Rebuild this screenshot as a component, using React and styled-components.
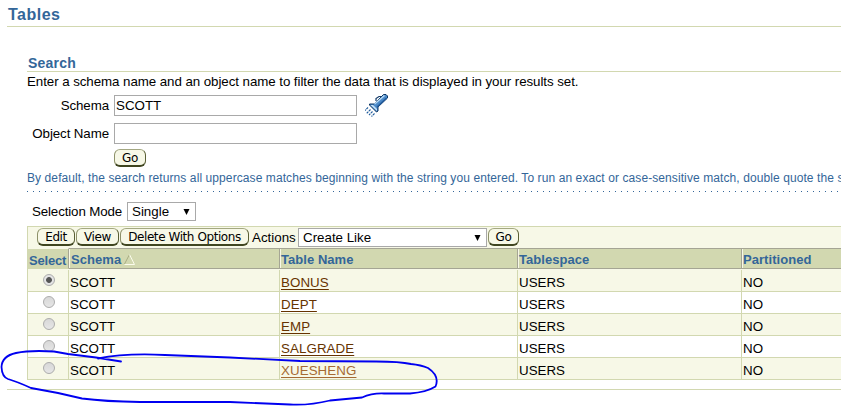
import React from 'react';
import styled, { createGlobalStyle, css } from 'styled-components';

const GlobalStyle = createGlobalStyle`
  * { box-sizing: border-box; }
  html, body { margin: 0; background: #fff; overflow: hidden; }
  body { font: 13.33px/16px "Liberation Sans", Arial, sans-serif; color: #000; }
`;

const Page = styled.main`
  position: relative;
  width: 841px;
  height: 410px;
  padding: 0 0 0 7px;
  overflow: hidden;
  white-space: nowrap;
`;
const PageTitle = styled.h1`
  margin: 0;
  height: 27px;
  padding: 5px 0 0 1px;
  border-bottom: 1px solid #d2d8b0;
  color: #336699;
  font-size: 16px;
  line-height: 20px;
  letter-spacing: 0.5px;
`;
const Content = styled.section`
  height: 363px;
  padding: 28px 0 0 20px;
  border-bottom: 1px solid #d2d8b0;
`;
const SectionTitle = styled.h2`
  margin: 0;
  height: 17px;
  padding-left: 1px;
  border-bottom: 1px solid #d2d8b0;
  color: #336699;
  font-size: 14px;
  line-height: 16px;
  letter-spacing: 0.2px;
`;
const Intro = styled.p`
  margin: 0;
  height: 23px;
  line-height: 19px;
  letter-spacing: -0.067px;
`;
const Field = styled.div`
  display: grid;
  grid-template-columns: 82px 243px auto;
  column-gap: 5px;
  height: 28px;
  align-items: start;
`;
const Label = styled.label`
  text-align: right;
  line-height: 21px;
  letter-spacing: -0.1px;
`;
const Input = styled.input`
  width: 243px;
  height: 21px;
  padding: 0 1px;
  border: 1px solid #a9a9a9;
  outline: 0;
  font: 13.33px "Liberation Sans", Arial, sans-serif;
`;
const FieldIcon = styled.div`
  margin: -2px 0 0 3px;
  line-height: 0;
`;
const ButtonRow = styled.div`
  height: 21px;
  display: flex;
  align-items: flex-start;
  margin: -2px 0 0 87px;
`;
const Button = styled.button`
  width: ${(p) => p.$width}px;
  height: 18px;
  flex: none;
  padding: 1px 0 0;
  border: 1px solid #7b8057;
  border-color: #a3a782 #595f35 #3f4520 #8d9169;
  border-bottom-width: 2px;
  border-radius: 6px;
  background: #f7f8e7;
  color: #000;
  font: 12px/14px "DejaVu Sans", Verdana, sans-serif;
  letter-spacing: -0.42px;
  white-space: nowrap;
`;
const Hint = styled.p`
  margin: 0;
  height: 21px;
  color: #336699;
  font-size: 12px;
  line-height: 16px;
  letter-spacing: 0.09px;
`;
const Dots = styled.div`
  height: 1px;
  background: repeating-linear-gradient(90deg, #336699 0 1px, transparent 1px 6px);
`;
const ModeRow = styled.div`
  display: flex;
  align-items: center;
  height: 34px;
  padding: 5px 0 0 5px;
`;
const ModeLabel = styled.span`
  width: 95px;
  letter-spacing: -0.13px;
`;
const Picker = styled.div`
  display: flex;
  justify-content: space-between;
  align-items: center;
  flex: none;
  width: ${(p) => p.$width}px;
  height: 19px;
  padding: 0 5px 0 4px;
  border: 1px solid #a9a9a9;
  background: #fff;
`;
const TableBox = styled.div`
  width: 900px;
  border: 1px solid #d2d8b0;
  border-right: 0;
  border-bottom: 0;
`;
const Toolbar = styled.div`
  display: flex;
  align-items: flex-start;
  gap: 1px;
  height: 21px;
  padding: 1px 0 0 9px;
  background: #f7f8e7;
`;
const ActionLabel = styled.span`
  width: 45px;
  margin-left: 2px;
  line-height: 19px;
  flex: none;
`;
const columns = css`
  display: grid;
  grid-template-columns: 41px 211px 238px 224px 1fr;
`;
const HeaderRow = styled.div`
  ${columns}
  height: 22px;
  background: #f7f8e7;
`;
const HeaderCell = styled.div`
  display: flex;
  gap: 3px;
  height: 21px;
  padding: 2px 0 0 1px;
  border: 1px solid #a5a594;
  border-width: 1px 1px 1px 0;
  background: #d2d8b0;
  box-shadow: inset 1px 0 #f7f8e7;
  color: #336699;
  font-size: 13px;
  font-weight: bold;
  line-height: 17px;
  letter-spacing: 0.05px;
  ${(p) => p.$sorted && css`
    padding-left: 2px;
  `}
  ${(p) => p.$plain && css`
    border-top-color: #f7f8e7;
    border-bottom-color: #d2d8b0;
    box-shadow: none;
    padding: 3px 0 0 1px;
    letter-spacing: -0.2px;
  `}
`;
const Row = styled.div`
  ${columns}
  height: 22px;
  background: ${(p) => (p.$shaded ? '#f7f8e7' : '#fff')};
`;
const Cell = styled.div`
  height: 22px;
  padding: 5px 0 0 1px;
  border: 1px solid #d2d8b0;
  border-width: 0 1px 1px 0;
`;
const Radio = styled.div`
  width: 12px;
  height: 12px;
  margin: -1px 0 0 14px;
  border: 1px solid #acacac;
  border-radius: 50%;
  background: ${(p) => (p.$checked
    ? 'radial-gradient(circle, #555 0 2.5px, #e4e4e4 3.3px)'
    : 'linear-gradient(#d8d8d8, #e6e6e6)')};
`;
const TableLink = styled.a`
  color: ${(p) => (p.$active ? '#a56a33' : '#663300')};
  text-decoration: underline;
  text-underline-offset: 2px;
  text-decoration-thickness: 1px;
  letter-spacing: 0.08px;
`;
const Annotation = styled.svg`
  position: absolute;
  inset: 0;
  pointer-events: none;
`;

const Arrow = () => (
  <svg width="7" height="6" viewBox="0 0 7 6"><path d="M.5 0h6L3.5 6Z" fill="#000" /></svg>
);
const SortMark = () => (
  <svg width="12" height="15" viewBox="0 0 12 15">
    <path d="M5.5 3.5L.5 13" fill="none" stroke="#a9ad83" />
    <path d="M5.5 3.5L10.5 13.5H.5" fill="none" stroke="#fbfcec" />
  </svg>
);
const Flashlight = () => (
  <svg width="26" height="25" viewBox="0 0 26 25">
    <path d="M11 8V5.5L14 3.5h2" fill="none" stroke="#123a68" strokeWidth="1.2" />
    <path d="M4.5 11h4.5L18.5 1.5H21l1.5 1.5v2L13 14v4l-1.5 1L4.5 12Z" fill="#4c8ac8" stroke="#0c3563" />
    <path d="M9.5 11L19.5 2.5" stroke="#b8daf5" strokeWidth="1.5" />
    <path d="M5.5 12h2.5l4 4v2Z" fill="#c6e3fa" />
    <path d="M12 14L21.5 5" stroke="#245d9e" strokeWidth="1.4" />
    <path d="M3 14.5L0 17.5M5.5 16.5L1.5 20.5M7.5 18.5L4 22M9.5 20.5L6.5 23.5" stroke="#205c9c" strokeWidth="1.1" strokeDasharray="2.3 0.7" />
  </svg>
);

const rows = ['BONUS', 'DEPT', 'EMP', 'SALGRADE', 'XUESHENG'];

export default function App() {
  return (
    <>
      <GlobalStyle />
      <Page>
        <PageTitle>Tables</PageTitle>
        <Content>
          <SectionTitle>Search</SectionTitle>
          <Intro>Enter a schema name and an object name to filter the data that is displayed in your results set.</Intro>
          <Field>
            <Label>Schema</Label>
            <Input defaultValue="SCOTT" />
            <FieldIcon><Flashlight /></FieldIcon>
          </Field>
          <Field>
            <Label>Object Name</Label>
            <Input />
          </Field>
          <ButtonRow><Button $width={32}>Go</Button></ButtonRow>
          <Hint>By default, the search returns all uppercase matches beginning with the string you entered. To run an exact or case-sensitive match, double quote the s</Hint>
          <Dots />
          <ModeRow>
            <ModeLabel>Selection Mode</ModeLabel>
            <Picker $width={69}>Single<Arrow /></Picker>
          </ModeRow>
          <TableBox>
            <Toolbar>
              <Button $width={38}>Edit</Button>
              <Button $width={43}>View</Button>
              <Button $width={129}>Delete With Options</Button>
              <ActionLabel>Actions</ActionLabel>
              <Picker $width={189}>Create Like<Arrow /></Picker>
              <Button $width={31}>Go</Button>
            </Toolbar>
            <HeaderRow>
              <HeaderCell $plain>Select</HeaderCell>
              <HeaderCell $sorted>Schema<SortMark /></HeaderCell>
              <HeaderCell>Table Name</HeaderCell>
              <HeaderCell>Tablespace</HeaderCell>
              <HeaderCell>Partitioned</HeaderCell>
            </HeaderRow>
            {rows.map((name, i) => (
              <Row key={name} $shaded={i % 2 === 0}>
                <Cell><Radio $checked={i === 0} /></Cell>
                <Cell>SCOTT</Cell>
                <Cell><TableLink $active={i === 4}>{name}</TableLink></Cell>
                <Cell>USERS</Cell>
                <Cell>NO</Cell>
              </Row>
            ))}
          </TableBox>
        </Content>
        <Annotation width="841" height="410" viewBox="0 0 841 410">
          <path
            d="M121 361.5L96 357.5L68 354L54 351.5Q30 350 16 353Q2 356 1.5 367Q2 377 8 379Q18 382 31 388L58 393L82 398.5Q105 401.5 140 402H230L290 404.5Q310 405.5 330 400.5L362 397.5Q372 393 384 393.5H410Q427 392 435.5 386.5Q440 376 428 368Q421 365 411 364Q400 361.5 376 361.5L300 361L230 357.5L165 355Q125 353 98 358.5"
            fill="none" stroke="#0000f0" strokeWidth="1.8" strokeLinecap="round" strokeLinejoin="round"
          />
        </Annotation>
      </Page>
    </>
  );
}
